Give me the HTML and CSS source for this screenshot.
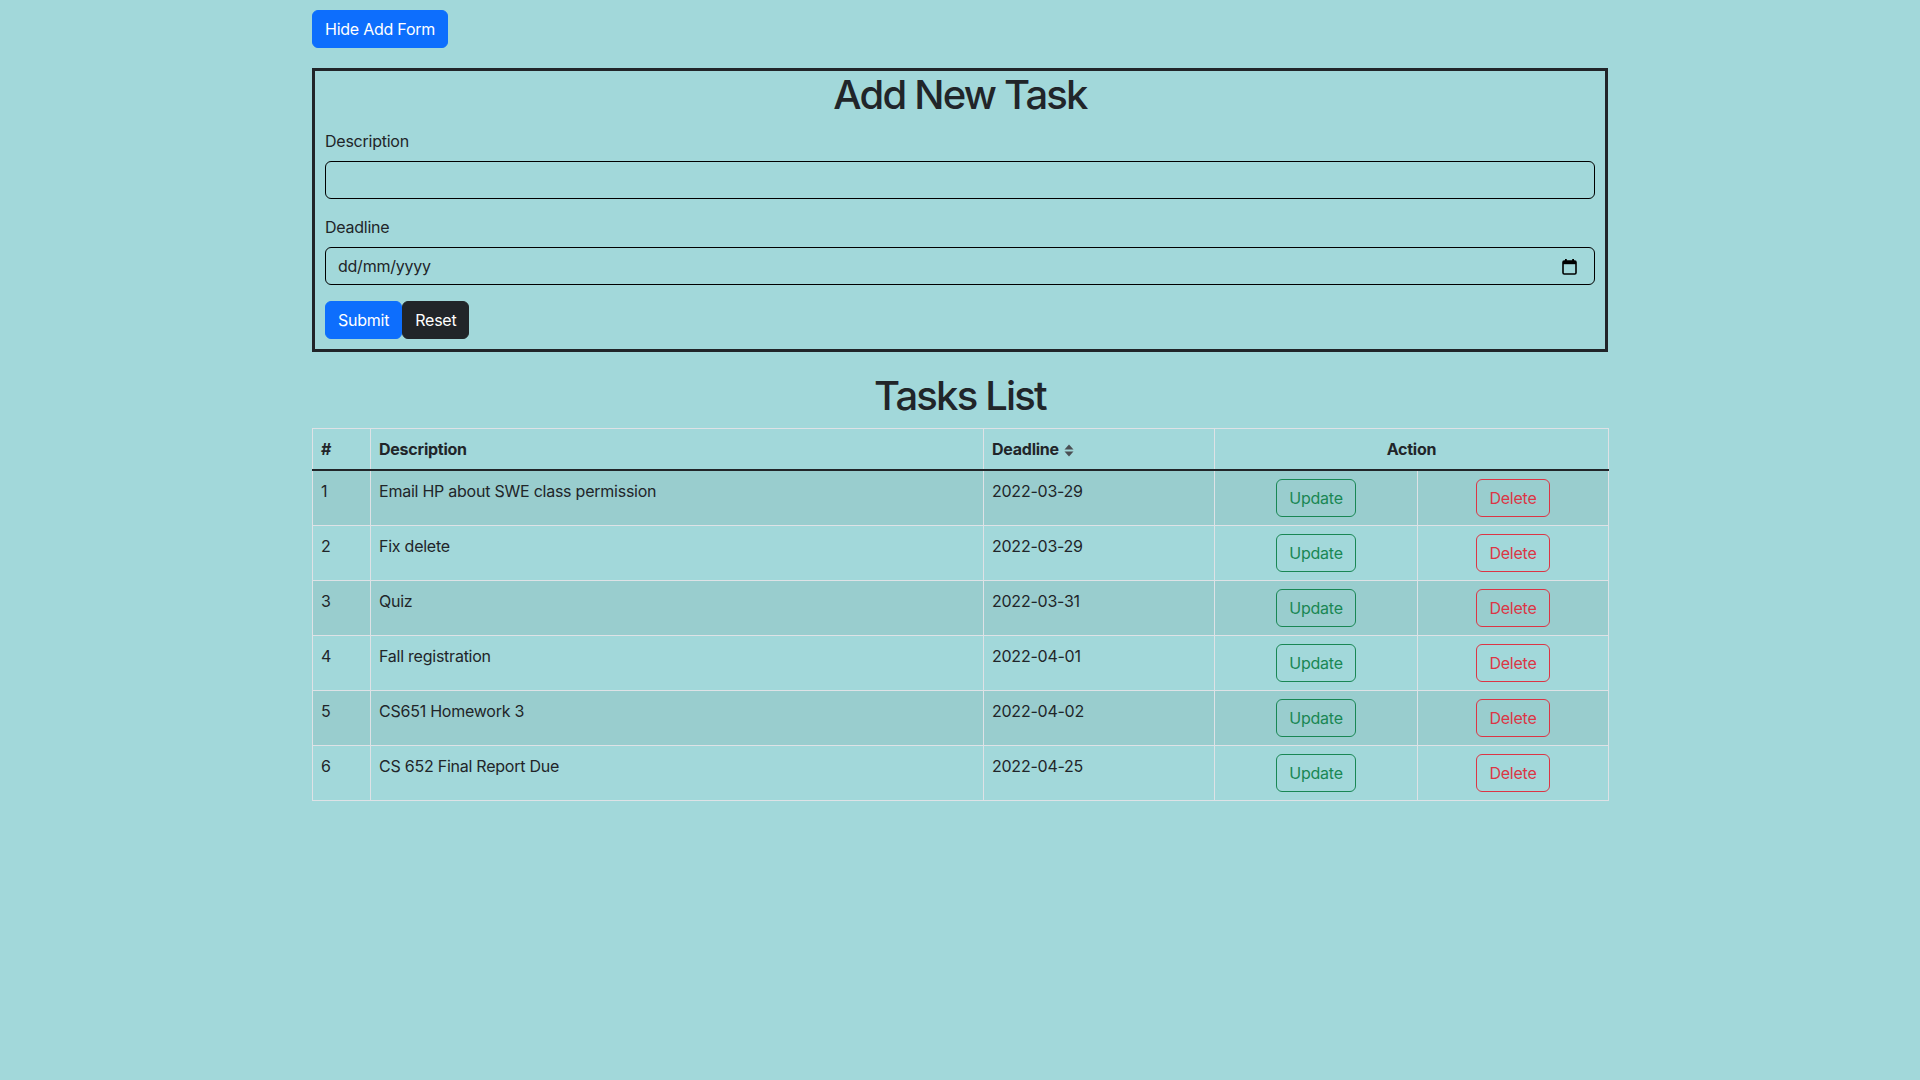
FILE: index.html
```html
<!DOCTYPE html>
<html lang="en">
<head>
<meta charset="utf-8">
<title>Tasks</title>
<link rel="stylesheet" href="styles.css">
</head>
<body>
<div class="container">
  <button class="btn btn-primary top-btn" type="button">Hide Add Form</button>

  <form class="task-form">
    <h1 class="title form-title">Add New Task</h1>
    <div class="field">
      <label class="form-label" for="desc">Description</label>
      <input class="form-control" id="desc" type="text">
    </div>
    <div class="field">
      <label class="form-label">Deadline</label>
      <div class="form-control date-control">
        <span>dd/mm/yyyy</span>
        <svg class="cal-icon" width="15" height="17" viewBox="0 0 15 17" aria-hidden="true">
          <rect x="1" y="3" width="13" height="13" rx="1.2" fill="none" stroke="#000" stroke-width="1.6"/>
          <rect x="1" y="3" width="13" height="3.2" fill="#000"/>
          <rect x="3" y="1" width="1.8" height="3" fill="#000"/>
          <rect x="10.2" y="1" width="1.8" height="3" fill="#000"/>
        </svg>
      </div>
    </div>
    <div class="form-actions">
      <button class="btn btn-primary" type="button">Submit</button><button class="btn btn-dark" type="button">Reset</button>
    </div>
  </form>

  <h1 class="title list-title">Tasks List</h1>

  <table class="tasks">
    <colgroup>
      <col class="c-num"><col class="c-desc"><col class="c-dl"><col class="c-up"><col class="c-del">
    </colgroup>
    <thead>
      <tr>
        <th>#</th>
        <th>Description</th>
        <th>Deadline <svg class="sort-icon" width="10" height="13" viewBox="0 0 10 13" aria-hidden="true"><path d="M5 0.5 L9.5 5.5 L0.5 5.5 Z" fill="#4a4f53"/><path d="M5 12.5 L9.5 7.5 L0.5 7.5 Z" fill="#4a4f53"/></svg></th>
        <th colspan="2" class="center">Action</th>
      </tr>
    </thead>
    <tbody>
      <tr><td>1</td><td>Email HP about SWE class permission</td><td>2022-03-29</td><td class="center"><button class="btn btn-out-success" type="button">Update</button></td><td class="center"><button class="btn btn-out-danger" type="button">Delete</button></td></tr>
      <tr><td>2</td><td>Fix delete</td><td>2022-03-29</td><td class="center"><button class="btn btn-out-success" type="button">Update</button></td><td class="center"><button class="btn btn-out-danger" type="button">Delete</button></td></tr>
      <tr><td>3</td><td>Quiz</td><td>2022-03-31</td><td class="center"><button class="btn btn-out-success" type="button">Update</button></td><td class="center"><button class="btn btn-out-danger" type="button">Delete</button></td></tr>
      <tr><td>4</td><td>Fall registration</td><td>2022-04-01</td><td class="center"><button class="btn btn-out-success" type="button">Update</button></td><td class="center"><button class="btn btn-out-danger" type="button">Delete</button></td></tr>
      <tr><td>5</td><td>CS651 Homework 3</td><td>2022-04-02</td><td class="center"><button class="btn btn-out-success" type="button">Update</button></td><td class="center"><button class="btn btn-out-danger" type="button">Delete</button></td></tr>
      <tr><td>6</td><td>CS 652 Final Report Due</td><td>2022-04-25</td><td class="center"><button class="btn btn-out-success" type="button">Update</button></td><td class="center"><button class="btn btn-out-danger" type="button">Delete</button></td></tr>
    </tbody>
  </table>
</div>
</body>
</html>
```

FILE: styles.css
```css
* { box-sizing: border-box; }

html, body {
  margin: 0;
  padding: 0;
}

body {
  background: #a2d8da;
  color: #212529;
  font-family: "Inter", "Liberation Sans", sans-serif;
  font-size: 16px;
  line-height: 1.5;
  letter-spacing: -0.015em;
}

.container {
  width: 1320px;
  margin: 0 auto;
  padding: 10px 12px 0;
}

.btn {
  display: inline-block;
  height: 38px;
  padding: 6px 12px;
  font-family: inherit;
  font-size: 16px;
  line-height: 24px;
  letter-spacing: -0.015em;
  border: 1px solid transparent;
  border-radius: 6px;
  background: transparent;
  cursor: pointer;
  vertical-align: middle;
}

.btn-primary { background: #0d6efd; border-color: #0d6efd; color: #fff; }
.btn-dark { background: #212529; border-color: #212529; color: #fff; }
.btn-out-success { color: #198754; border-color: #198754; }
.btn-out-danger { color: #dc3545; border-color: #dc3545; }

.top-btn { display: block; }

.task-form {
  margin-top: 20px;
  border: 3px solid #212529;
  padding: 0 10px 10px;
}

.title {
  margin: 0 0 8px;
  font-size: 40px;
  line-height: 1.2;
  font-weight: 500;
  text-align: center;
  letter-spacing: -0.045em;
}

.form-title {
  margin-bottom: 10px;
}

.field { margin-bottom: 16px; }

.form-label {
  display: block;
  margin-bottom: 8px;
}

.form-control {
  display: block;
  width: 100%;
  height: 38px;
  padding: 6px 12px;
  font-family: inherit;
  font-size: 16px;
  line-height: 24px;
  letter-spacing: -0.015em;
  color: #212529;
  background: transparent;
  border: 1px solid #000;
  border-radius: 6px;
  outline: none;
}

.date-control {
  display: flex;
  align-items: center;
  justify-content: space-between;
  padding-right: 17px;
}

.cal-icon { display: block; }

.form-actions { display: flex; }

.list-title { margin-top: 20px; }

.tasks {
  width: 100%;
  border-collapse: collapse;
  table-layout: fixed;
  border: 1px solid #dee2e6;
}

.c-num { width: 58px; }
.c-desc { width: 613px; }
.c-dl { width: 231px; }
.c-up { width: 203px; }
.c-del { width: 191px; }

.tasks th,
.tasks td {
  padding: 8px;
  border: 1px solid #dee2e6;
  text-align: left;
  vertical-align: top;
}

.tasks th {
  font-weight: 700;
  vertical-align: bottom;
}

.tasks thead tr th { border-bottom: 2px solid #212529; }

.tasks tbody tr:nth-child(odd) td { background: rgba(0, 0, 0, 0.05); }

.tasks .center { text-align: center; }

.sort-icon {
  display: inline-block;
  vertical-align: -2px;
  margin-left: 2px;
}
```
